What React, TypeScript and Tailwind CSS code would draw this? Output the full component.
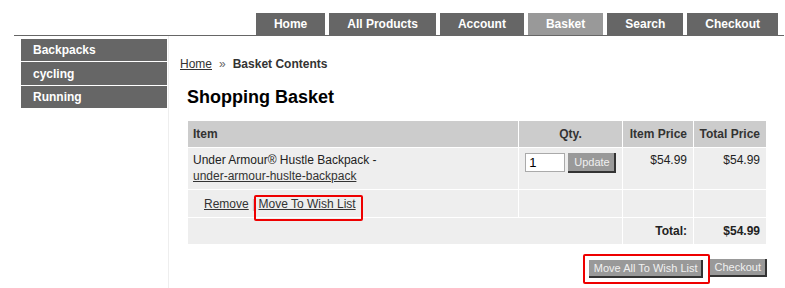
const tabs = [
  { label: "Home", active: false },
  { label: "All Products", active: false },
  { label: "Account", active: false },
  { label: "Basket", active: true },
  { label: "Search", active: false },
  { label: "Checkout", active: false },
];

const categories = [
  { name: "Backpacks", cls: "h-[22px]" },
  { name: "cycling", cls: "h-[23px]" },
  { name: "Running", cls: "h-[22px]" },
];

const App = () => {
  return (
    <div className="w-[785px] h-[288px] overflow-hidden bg-white font-['Liberation_Sans',Arial,sans-serif] text-[12px] text-[#222]">
      {/* top nav */}
      <div className="ml-[14px] w-[770px] pt-[13px] border-b border-[#666]">
        <ul className="flex justify-end gap-[4px] pr-[6px]">
          {tabs.map((tab) => (
            <li
              key={tab.label}
              className={
                tab.active
                  ? "h-[22px] px-[18px] flex items-center bg-[#999] text-white font-bold text-[12px]"
                  : "h-[22px] px-[18px] flex items-center bg-[#666] text-white font-bold text-[12px]"
              }
            >
              {tab.label}
            </li>
          ))}
        </ul>
      </div>

      <div className="ml-[14px] flex">
        {/* side menu */}
        <div className="w-[154px] pt-[3px] pl-[7px] pr-px">
          {categories.map((cat) => (
            <div
              key={cat.name}
              className={`${cat.cls} mb-px bg-[#666] text-white font-bold pl-[12px] flex items-center`}
            >
              {cat.name}
            </div>
          ))}
        </div>

        {/* main content */}
        <div className="flex-1 h-[252px] border-l border-[#eee] pl-[11px]">
          <div className="pt-[21px] leading-[14px] text-[#333]">
            <a href="#" className="underline">
              Home
            </a>
            <span className="mx-[7px] text-[#666]">»</span>
            <span className="font-bold">Basket Contents</span>
          </div>

          <h1 className="ml-[7px] mt-[16px] text-[18px] leading-[21px] font-bold text-black">
            Shopping Basket
          </h1>

          <table className="ml-[7px] mt-[12px] w-[580px] table-fixed border-separate border-spacing-[1px]">
            <colgroup>
              <col className="w-[330px]" />
              <col className="w-[103px]" />
              <col className="w-[70px]" />
              <col className="w-[72px]" />
            </colgroup>
            <thead>
              <tr className="h-[26px] bg-[#ccc] text-[#333] font-bold">
                <th className="text-left px-[5px] font-bold">Item</th>
                <th className="text-center font-bold">Qty.</th>
                <th className="text-right pr-[6px] whitespace-nowrap font-bold">
                  Item Price
                </th>
                <th className="text-right pr-[6px] whitespace-nowrap font-bold">
                  Total Price
                </th>
              </tr>
            </thead>
            <tbody>
              <tr className="h-[41px] bg-[#eee] align-top leading-[16px]">
                <td className="pl-[5px] pt-[4px]">
                  Under Armour® Hustle Backpack -
                  <br />
                  <a href="#" className="underline text-[#333]">
                    under-armour-huslte-backpack
                  </a>
                </td>
                <td className="pt-[5px]">
                  <div className="flex justify-center items-start gap-[3px]">
                    <input
                      type="text"
                      defaultValue="1"
                      className="w-[40px] h-[19px] border border-[#aaa] bg-white px-[3px] text-[13px] text-black"
                    />
                    <button className="h-[20px] pl-[6px] pr-[4px] bg-[#999] text-[#f0f0f0] text-[11px] border-r-2 border-b-2 border-[#333]">
                      Update
                    </button>
                  </div>
                </td>
                <td className="text-right pr-[6px] pt-[4px]">$54.99</td>
                <td className="text-right pr-[6px] pt-[4px]">$54.99</td>
              </tr>
              <tr className="h-[27px] bg-[#eee]">
                <td className="pl-[16px] text-[#333]">
                  <a href="#" className="underline">
                    Remove
                  </a>
                  <span className="text-[#bbb]"> | </span>
                  <span className="relative">
                    <a href="#" className="underline">
                      Move To Wish List
                    </a>
                    <span className="absolute -left-[4px] -right-[7px] -top-[2px] -bottom-[10px] border-2 border-[#e00] rounded-[2px]" />
                  </span>
                </td>
                <td></td>
                <td></td>
                <td></td>
              </tr>
              <tr className="h-[26px] bg-[#eee] font-bold">
                <td colSpan={2}></td>
                <td className="text-right pr-[6px]">Total:</td>
                <td className="text-right pr-[6px]">$54.99</td>
              </tr>
            </tbody>
          </table>

          <div className="w-[587px] mt-[14px] flex justify-end gap-[7px]">
            <div className="relative">
              <button className="h-[18px] pl-[5px] pr-[3px] bg-[#999] text-[#f0f0f0] text-[11px] leading-[16px] border-r-2 border-b-2 border-[#333]">
                Move All To Wish List
              </button>
              <span className="absolute -left-[6px] -right-[7px] -top-[5px] -bottom-[6px] border-2 border-[#e00] rounded-[2px]" />
            </div>
            <button className="h-[18px] pl-[5px] pr-[4px] bg-[#999] text-[#f0f0f0] text-[11px] leading-[16px] border-r-2 border-b-2 border-[#333]">
              Checkout
            </button>
          </div>
        </div>
      </div>
    </div>
  );
};

export default App;
